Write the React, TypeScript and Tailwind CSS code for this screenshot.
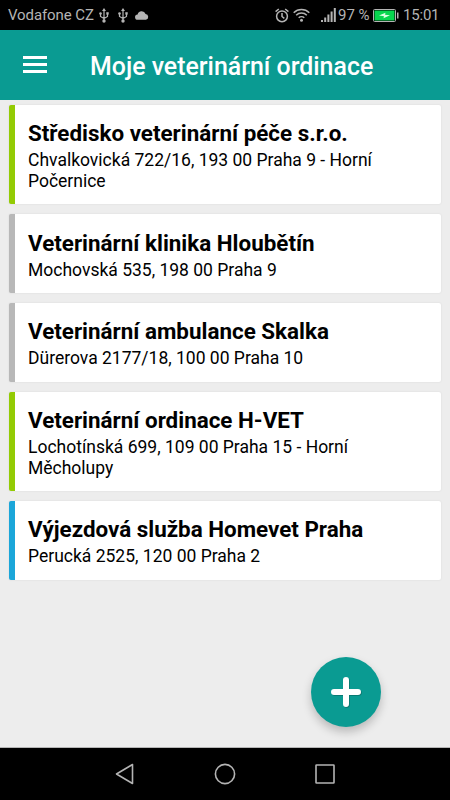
type Clinic = {
  name: string;
  address: string;
  color: string;
};

const clinics: Clinic[] = [
  {
    name: "Středisko veterinární péče s.r.o.",
    address: "Chvalkovická 722/16, 193 00 Praha 9 - Horní Počernice",
    color: "border-[#93cb04]",
  },
  {
    name: "Veterinární klinika Hloubětín",
    address: "Mochovská 535, 198 00 Praha 9",
    color: "border-[#b8b8b8]",
  },
  {
    name: "Veterinární ambulance Skalka",
    address: "Dürerova 2177/18, 100 00 Praha 10",
    color: "border-[#b8b8b8]",
  },
  {
    name: "Veterinární ordinace H-VET",
    address: "Lochotínská 699, 109 00 Praha 15 - Horní Měcholupy",
    color: "border-[#93cb04]",
  },
  {
    name: "Výjezdová služba Homevet Praha",
    address: "Perucká 2525, 120 00 Praha 2",
    color: "border-[#1ba6d9]",
  },
];

function UsbIcon() {
  return (
    <svg width="10" height="15" viewBox="0 0 10 15" fill="none" stroke="#b4b4b4" strokeWidth="1.2">
      <path d="M5 3v9M1.500 5.500V8.500L5 10.500M8.500 5.500V8.500L5 10.500" />
      <path d="M5 0L7 3H3z" fill="#b4b4b4" stroke="none" />
      <circle cx="5" cy="13" r="1.700" fill="#b4b4b4" stroke="none" />
      <circle cx="1.500" cy="5.500" r="1.300" fill="#b4b4b4" stroke="none" />
      <path d="M7.300 4.200h2.400v2.400H7.300z" fill="#b4b4b4" stroke="none" />
    </svg>
  );
}

function StatusBar() {
  return (
    <div className="flex h-[30px] items-center bg-black pl-2 pr-[12px] text-[#b4b4b4]">
      <span className="w-[91px] whitespace-nowrap text-[15px] tracking-[-0.1px]">Vodafone CZ</span>
      <UsbIcon />
      <span className="w-[9px]" />
      <UsbIcon />
      <svg className="ml-[7px]" width="14" height="9" viewBox="0 0 14 9" fill="#b4b4b4">
        <path d="M2.700 8.700A2.600 2.600 0 0 1 2.600 3.500A4.200 4.200 0 0 1 10.600 3A2.900 2.900 0 0 1 11 8.700z" />
      </svg>

      <div className="ml-auto flex items-center">
        {/* alarm */}
        <svg width="14" height="15" viewBox="0 0 14 15" fill="none" stroke="#b4b4b4" strokeWidth="1.5">
          <circle cx="7" cy="8.300" r="5.400" />
          <path d="M7 5v3.500l2.300 1.800M0.600 3.600L3.800 1M13.400 3.600L10.200 1" />
        </svg>
        {/* wifi */}
        <svg className="ml-[4px]" width="17" height="14" viewBox="0 0 17 14" fill="none" stroke="#b4b4b4" strokeWidth="1.5">
          <path d="M0.700 4.700A11 11 0 0 1 16.300 4.700M3.200 7.300A7.400 7.400 0 0 1 13.800 7.300M5.700 9.800A4 4 0 0 1 11.300 9.800" />
          <circle cx="8.500" cy="12.300" r="1.500" fill="#b4b4b4" stroke="none" />
        </svg>
        {/* signal */}
        <svg className="ml-[11px]" width="15" height="14" viewBox="0 0 15 14" fill="#b4b4b4">
          <path d="M0 12h2v2H0zM3.200 9.500h2V14h-2zM6.400 6.500h2V14h-2zM9.600 3.500h2V14h-2zM12.800 0h2v14h-2z" />
        </svg>
        <span className="ml-[2px] w-[35px] whitespace-nowrap text-[15px]">97 %</span>
        {/* battery */}
        <svg width="26" height="13" viewBox="0 0 26 13">
          <rect x="0.500" y="0.500" width="22" height="12" rx="1" fill="none" stroke="#b4b4b4" />
          <rect x="1.500" y="1.500" width="20" height="10" fill="#07d64f" />
          <path d="M6 6.500l6.500-2.700-.5 2 5 .5-6.500 3 .5-2z" fill="#d8ffe2" />
          <path d="M24 3.500h1.500v6H24z" fill="#b4b4b4" />
        </svg>
        <span className="ml-[4px] w-[35px] whitespace-nowrap text-[15px] tracking-[-0.2px]">15:01</span>
      </div>
    </div>
  );
}

function Header() {
  return (
    <header className="flex h-[70px] items-center bg-[#0a9b92] pl-[23px]">
      <button className="-mt-px flex w-6 flex-col gap-[4px]">
        <span className="h-[3px] bg-white" />
        <span className="h-[3px] bg-white" />
        <span className="h-[3px] bg-white" />
      </button>
      <h1 className="ml-[43px] mt-[4px] whitespace-nowrap text-[24.9px] font-medium text-white">
        Moje veterinární ordinace
      </h1>
    </header>
  );
}

function ClinicCard({ clinic }: { clinic: Clinic }) {
  return (
    <div
      className={`rounded-[2px] border-l-[6px] bg-white pb-[13px] pl-[13px] pr-[50px] pt-[14.4px] shadow-[0_0_2px_rgba(0,0,0,0.1)] ${clinic.color}`}
    >
      <h2 className="whitespace-nowrap text-[22.4px] font-bold leading-[28px]">{clinic.name}</h2>
      <p className="mt-[3px] text-[17.5px] leading-[20.5px]">{clinic.address}</p>
    </div>
  );
}

function NavBar() {
  return (
    <nav className="flex h-[52px] items-center justify-between bg-black px-[114px]">
      <svg width="22" height="22" viewBox="0 0 22 22" fill="none" stroke="#b4b4b4" strokeWidth="1.6" strokeLinejoin="round">
        <path d="M2.500 11L18.500 1.500V20.500z" />
      </svg>
      <svg width="22" height="22" viewBox="0 0 22 22" fill="none" stroke="#b4b4b4" strokeWidth="1.6">
        <circle cx="11" cy="11" r="9.600" />
      </svg>
      <svg width="22" height="22" viewBox="0 0 22 22" fill="none" stroke="#b4b4b4" strokeWidth="1.6">
        <rect x="2" y="2" width="18" height="18" rx="0.500" />
      </svg>
    </nav>
  );
}

export default function App() {
  return (
    <div className="flex h-[800px] w-[450px] flex-col overflow-hidden bg-[#ededed] font-[Roboto,sans-serif] text-black">
      <StatusBar />
      <Header />
      <main className="relative flex flex-1 flex-col gap-[9.85px] border-b border-[#b5b5b5] px-[9px] pt-[5px]">
        {clinics.map((clinic) => (
          <ClinicCard key={clinic.name} clinic={clinic} />
        ))}

        {/* add button */}
        <button className="absolute bottom-[20px] right-[69px] flex size-[70px] items-center justify-center rounded-full bg-[#0a9b92] shadow-[0_5px_10px_rgba(0,0,0,0.22)]">
          <svg width="34" height="34" viewBox="0 0 34 34" fill="none" strokeWidth="6" strokeLinecap="round">
            <path d="M17.700 5.700v24M5.700 17.700h24" stroke="#087069" />
            <path d="M17 5v24M5 17h24" stroke="#fff" />
          </svg>
        </button>
      </main>
      <NavBar />
    </div>
  );
}
